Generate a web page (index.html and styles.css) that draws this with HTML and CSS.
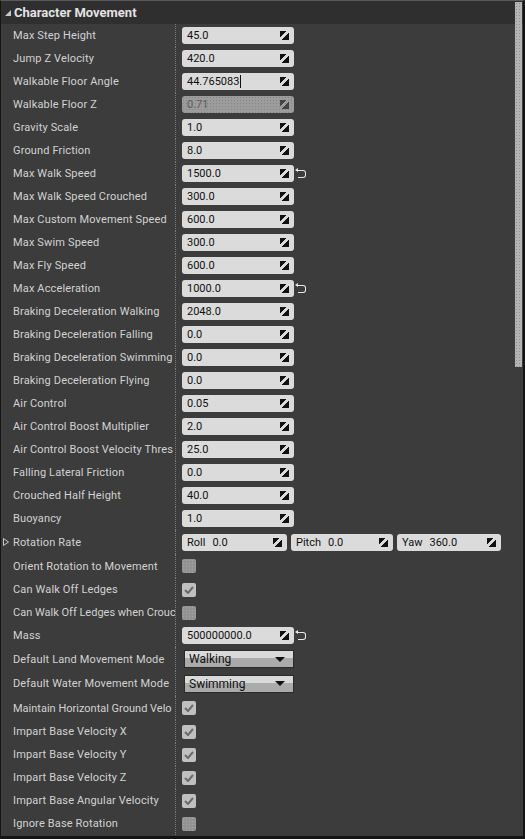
FILE: index.html
```html
<!DOCTYPE html>
<html>
<head>
<meta charset="utf-8">
<link rel="stylesheet" href="styles.css">
</head>
<body>
<div class="panel">
  <div class="scrollbar"></div>
  <div class="header"><svg class="hdr-tri" width="6" height="6" viewBox="0 0 6 6"><polygon points="6,0 6,6 0,6" fill="#c8c8c8"/></svg><span>Character Movement</span></div>
  <div class="rows">
    <div class="row"><div class="label">Max Step Height</div><div class="value"><div class="field"><span>45.0</span><i class="spin"></i></div></div></div>
    <div class="row"><div class="label">Jump Z Velocity</div><div class="value"><div class="field"><span>420.0</span><i class="spin"></i></div></div></div>
    <div class="row"><div class="label">Walkable Floor Angle</div><div class="value"><div class="field"><span class="editing">44.765083</span><i class="spin"></i></div></div></div>
    <div class="row"><div class="label">Walkable Floor Z</div><div class="value"><div class="field disabled"><span>0.71</span><i class="spin"></i></div></div></div>
    <div class="row"><div class="label">Gravity Scale</div><div class="value"><div class="field"><span>1.0</span><i class="spin"></i></div></div></div>
    <div class="row"><div class="label">Ground Friction</div><div class="value"><div class="field"><span>8.0</span><i class="spin"></i></div></div></div>
    <div class="row"><div class="label">Max Walk Speed</div><div class="value"><div class="field"><span>1500.0</span><i class="spin"></i></div><i class="reset"></i></div></div>
    <div class="row"><div class="label">Max Walk Speed Crouched</div><div class="value"><div class="field"><span>300.0</span><i class="spin"></i></div></div></div>
    <div class="row"><div class="label">Max Custom Movement Speed</div><div class="value"><div class="field"><span>600.0</span><i class="spin"></i></div></div></div>
    <div class="row"><div class="label">Max Swim Speed</div><div class="value"><div class="field"><span>300.0</span><i class="spin"></i></div></div></div>
    <div class="row"><div class="label">Max Fly Speed</div><div class="value"><div class="field"><span>600.0</span><i class="spin"></i></div></div></div>
    <div class="row"><div class="label">Max Acceleration</div><div class="value"><div class="field"><span>1000.0</span><i class="spin"></i></div><i class="reset"></i></div></div>
    <div class="row"><div class="label">Braking Deceleration Walking</div><div class="value"><div class="field"><span>2048.0</span><i class="spin"></i></div></div></div>
    <div class="row"><div class="label">Braking Deceleration Falling</div><div class="value"><div class="field"><span>0.0</span><i class="spin"></i></div></div></div>
    <div class="row"><div class="label">Braking Deceleration Swimming</div><div class="value"><div class="field"><span>0.0</span><i class="spin"></i></div></div></div>
    <div class="row"><div class="label">Braking Deceleration Flying</div><div class="value"><div class="field"><span>0.0</span><i class="spin"></i></div></div></div>
    <div class="row"><div class="label">Air Control</div><div class="value"><div class="field"><span>0.05</span><i class="spin"></i></div></div></div>
    <div class="row"><div class="label">Air Control Boost Multiplier</div><div class="value"><div class="field"><span>2.0</span><i class="spin"></i></div></div></div>
    <div class="row"><div class="label">Air Control Boost Velocity Thres</div><div class="value"><div class="field"><span>25.0</span><i class="spin"></i></div></div></div>
    <div class="row"><div class="label">Falling Lateral Friction</div><div class="value"><div class="field"><span>0.0</span><i class="spin"></i></div></div></div>
    <div class="row"><div class="label">Crouched Half Height</div><div class="value"><div class="field"><span>40.0</span><i class="spin"></i></div></div></div>
    <div class="row"><div class="label">Buoyancy</div><div class="value"><div class="field"><span>1.0</span><i class="spin"></i></div></div></div>
    <div class="row row24"><div class="label expander"><svg class="exp-tri" width="6" height="8" viewBox="0 0 6 8"><polygon points="0.5,0.5 5.5,4 0.5,7.5" fill="none" stroke="#c8c8c8" stroke-width="1"/></svg>Rotation Rate</div><div class="value rot">
      <div class="field f-roll"><span><b>Roll</b>0.0</span><i class="spin"></i></div>
      <div class="field f-pitch"><span><b>Pitch</b>0.0</span><i class="spin"></i></div>
      <div class="field f-yaw"><span><b>Yaw</b>360.0</span><i class="spin"></i></div>
    </div></div>
    <div class="row row24"><div class="label">Orient Rotation to Movement</div><div class="value"><div class="check off"></div></div></div>
    <div class="row"><div class="label">Can Walk Off Ledges</div><div class="value"><div class="check on"><svg width="10" height="8" viewBox="0 0 10 8"><polyline points="1,4 4,7 9,1" fill="none" stroke="#6a6a6a" stroke-width="2"/></svg></div></div></div>
    <div class="row"><div class="label tight">Can Walk Off Ledges when Crouc</div><div class="value"><div class="check off"></div></div></div>
    <div class="row"><div class="label">Mass</div><div class="value"><div class="field"><span>500000000.0</span><i class="spin"></i></div><i class="reset"></i></div></div>
    <div class="row row24"><div class="label">Default Land Movement Mode</div><div class="value"><div class="combo"><span>Walking</span><i class="caret"></i></div></div></div>
    <div class="row row25"><div class="label">Default Water Movement Mode</div><div class="value"><div class="combo"><span>Swimming</span><i class="caret"></i></div></div></div>
    <div class="row row24"><div class="label tight">Maintain Horizontal Ground Velo</div><div class="value"><div class="check on"><svg width="10" height="8" viewBox="0 0 10 8"><polyline points="1,4 4,7 9,1" fill="none" stroke="#6a6a6a" stroke-width="2"/></svg></div></div></div>
    <div class="row"><div class="label">Impart Base Velocity X</div><div class="value"><div class="check on"><svg width="10" height="8" viewBox="0 0 10 8"><polyline points="1,4 4,7 9,1" fill="none" stroke="#6a6a6a" stroke-width="2"/></svg></div></div></div>
    <div class="row"><div class="label">Impart Base Velocity Y</div><div class="value"><div class="check on"><svg width="10" height="8" viewBox="0 0 10 8"><polyline points="1,4 4,7 9,1" fill="none" stroke="#6a6a6a" stroke-width="2"/></svg></div></div></div>
    <div class="row"><div class="label">Impart Base Velocity Z</div><div class="value"><div class="check on"><svg width="10" height="8" viewBox="0 0 10 8"><polyline points="1,4 4,7 9,1" fill="none" stroke="#6a6a6a" stroke-width="2"/></svg></div></div></div>
    <div class="row"><div class="label">Impart Base Angular Velocity</div><div class="value"><div class="check on"><svg width="10" height="8" viewBox="0 0 10 8"><polyline points="1,4 4,7 9,1" fill="none" stroke="#6a6a6a" stroke-width="2"/></svg></div></div></div>
    <div class="row"><div class="label">Ignore Base Rotation</div><div class="value"><div class="check off"></div></div></div>
  </div>
</div>
</body>
</html>
```
FILE: styles.css
```css
* { box-sizing: border-box; }
html, body { margin: 0; padding: 0; background: #1a1a1a; }
body { width: 525px; height: 839px; overflow: hidden; font-family: Roboto, "Liberation Sans", sans-serif; }

.panel {
  position: relative;
  width: 525px;
  height: 839px;
  background: #3c3c3c;
  border-left: 1px solid #151515;
  border-right: 2px solid #151515;
  border-top: 1px solid #5a5a5a;
  border-bottom: 3px solid #151515;
  overflow: hidden;
}

.scrollbar {
  position: absolute;
  top: 1px;
  right: 1px;
  width: 7px;
  height: 365px;
  background: #b4b4b4;
  background-image: radial-gradient(#8e8e8e 0.6px, transparent 0.7px);
  background-size: 3px 3px;
}

.header {
  height: 23px;
  background: #2f2f2f;
  display: flex;
  align-items: center;
  padding-left: 4px;
  color: #e2e2e2;
  font-size: 13px;
  font-weight: bold;
}
.hdr-tri { margin-right: 3px; margin-top: 1px; }

.rows { display: flex; flex-direction: column; }
.row { height: 23px; display: grid; grid-template-columns: 174px 1fr; }
.row24 { height: 24px; }
.row25 { height: 25px; }

.label {
  color: #d2d2d2;
  font-size: 11px;
  letter-spacing: 0.15px;
  padding-left: 12px;
  display: flex;
  align-items: center;
  white-space: nowrap;
  overflow: hidden;
}
.label.tight { letter-spacing: 0; }
.label.expander { padding-left: 2px; }
.exp-tri { margin-right: 4px; }

.value {
  border-left: 1px dotted #7a7a7a;
  display: flex;
  align-items: center;
  padding-left: 6px;
  padding-right: 22px;
  gap: 4px;
}

.field {
  width: 112px;
  height: 17px;
  border-radius: 3px;
  background: #dbdbdb;
  display: flex;
  align-items: center;
  justify-content: space-between;
  padding: 0 5px 0 5px;
  font-size: 11px;
  color: #111;
  flex: none;
}
.field.disabled {
  background: #9c9c9c;
  background-image: radial-gradient(#858585 0.6px, transparent 0.7px);
  background-size: 3px 3px;
  color: #5c5c5c;
}
.editing { border-right: 1px solid #111; padding-right: 1px; }

.spin {
  width: 9px;
  height: 9px;
  flex: none;
  background: linear-gradient(135deg, #111 0 38%, transparent 38% 60%, #111 60% 100%);
}
.field.disabled .spin { background: linear-gradient(135deg, #444 0 38%, transparent 38% 60%, #444 60% 100%); }

.reset {
  width: 8px;
  height: 8px;
  flex: none;
  border: 1px solid #e8e8e8;
  border-left: none;
  border-radius: 0 3px 3px 0;
  position: relative;
}
.reset::before {
  content: "";
  position: absolute;
  left: -3px;
  top: -3px;
  border: 2px solid transparent;
  border-right: 3px solid #e8e8e8;
  border-left: none;
}

.rot { gap: 4px; }
.rot .field b { font-weight: normal; margin-right: 7px; }
.f-roll { width: 105px; }
.f-pitch { width: 102px; }
.f-yaw { width: 104px; }

.check {
  width: 14px;
  height: 14px;
  border-radius: 2px;
  display: flex;
  align-items: center;
  justify-content: center;
  flex: none;
}
.check.on { background: #c0c0c0; }
.check.off {
  background: #939393;
  background-image: radial-gradient(#a6a6a6 0.6px, transparent 0.7px);
  background-size: 3px 3px;
}

.combo {
  width: 110px;
  height: 18px;
  margin-left: 2px;
  border: 1px solid #2a2a2a;
  background: linear-gradient(#d9d9d9 0 45%, #ababab 45% 100%);
  display: flex;
  align-items: center;
  justify-content: space-between;
  padding: 0 8px 0 4px;
  font-size: 12px;
  color: #111;
  flex: none;
}
.caret {
  width: 0;
  height: 0;
  border-left: 5px solid transparent;
  border-right: 5px solid transparent;
  border-top: 5px solid #111;
}
```
